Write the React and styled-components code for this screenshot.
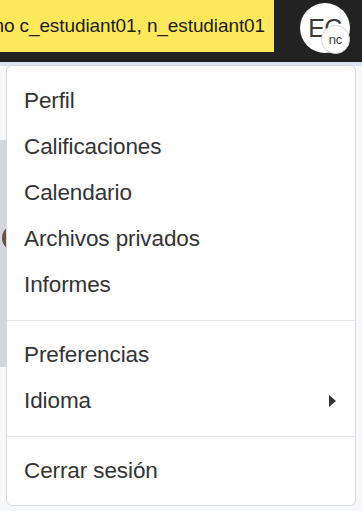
import React from "react";
import styled, { createGlobalStyle } from "styled-components";

const GlobalStyle = createGlobalStyle`
  html, body { margin: 0; padding: 0; }
  body {
    font-family: "Liberation Sans", Arial, sans-serif;
    background: #f7f8fa;
    overflow: hidden;
  }
`;

const Page = styled.div`
  position: relative;
  width: 362px;
  height: 511px;
  overflow: hidden;
  background: #f7f8fa;
`;

const Navbar = styled.header`
  height: 62px;
  background: #222222;
  display: flex;
  align-items: flex-start;
  justify-content: space-between;
`;

const LoginInfo = styled.div`
  width: 274px;
  height: 52px;
  box-sizing: border-box;
  background: #fde85c;
  display: flex;
  justify-content: flex-end;
  align-items: center;
  padding-right: 9px;
  overflow: hidden;
  white-space: nowrap;
  font-size: 19px;
  color: #1d1d1d;
  letter-spacing: -0.1px;
`;

const AvatarWrap = styled.div`
  position: relative;
  margin: 3px 12px 0 0;
`;

const Avatar = styled.div`
  width: 50px;
  height: 50px;
  border-radius: 50%;
  background: #ffffff;
  display: flex;
  align-items: center;
  justify-content: center;
  font-size: 25px;
  color: #3a3a3a;
  letter-spacing: -0.5px;
`;

const Badge = styled.div`
  position: absolute;
  left: 21px;
  top: 22px;
  width: 27px;
  height: 27px;
  border-radius: 50%;
  background: #ffffff;
  border: 1px solid #d6d6d6;
  display: flex;
  align-items: center;
  justify-content: center;
  font-size: 13px;
  color: #3a3a3a;
`;

const ShadowStrip = styled.div`
  height: 4px;
  background: #dde2f5;
`;

const Main = styled.main`
  padding-top: 74px;
`;

const GreyCard = styled.div`
  height: 227px;
  width: 200px;
  background: #d4d7de;
  display: flex;
  flex-direction: column;
  padding: 85px 0 0 2px;
  box-sizing: border-box;
`;

const PersonDot = styled.div`
  width: 26px;
  height: 26px;
  border-radius: 50%;
  background: #6b5048;
`;

const Menu = styled.nav`
  position: absolute;
  top: 65px;
  left: 6px;
  width: 350px;
  box-sizing: border-box;
  background: #ffffff;
  border: 1px solid #d9d9d9;
  border-radius: 6px;
  padding: 12px 0 11px;
  display: flex;
  flex-direction: column;
`;

const Item = styled.div`
  height: 46px;
  display: flex;
  align-items: center;
  justify-content: space-between;
  padding: 0 17px;
  font-size: 22.5px;
  color: #333333;
  letter-spacing: -0.1px;
`;

const Divider = styled.div`
  height: 1px;
  background: #e6e6e6;
  margin: 12px 0 11px;
`;

const Caret = styled.span`
  width: 0;
  height: 0;
  border-top: 6px solid transparent;
  border-bottom: 6px solid transparent;
  border-left: 7px solid #333333;
  margin-right: 2px;
`;

export default function App() {
  return (
    <Page>
      <GlobalStyle />
      <Navbar>
        <LoginInfo>Ha iniciado sesión como c_estudiant01, n_estudiant01</LoginInfo>
        <AvatarWrap>
          <Avatar>EC</Avatar>
          <Badge>nc</Badge>
        </AvatarWrap>
      </Navbar>
      <ShadowStrip />
      <Main>
        <GreyCard>
          <PersonDot />
        </GreyCard>
      </Main>
      <Menu>
        <Item>Perfil</Item>
        <Item>Calificaciones</Item>
        <Item>Calendario</Item>
        <Item>Archivos privados</Item>
        <Item>Informes</Item>
        <Divider />
        <Item>Preferencias</Item>
        <Item>
          Idioma
          <Caret />
        </Item>
        <Divider />
        <Item>Cerrar sesión</Item>
      </Menu>
    </Page>
  );
}
